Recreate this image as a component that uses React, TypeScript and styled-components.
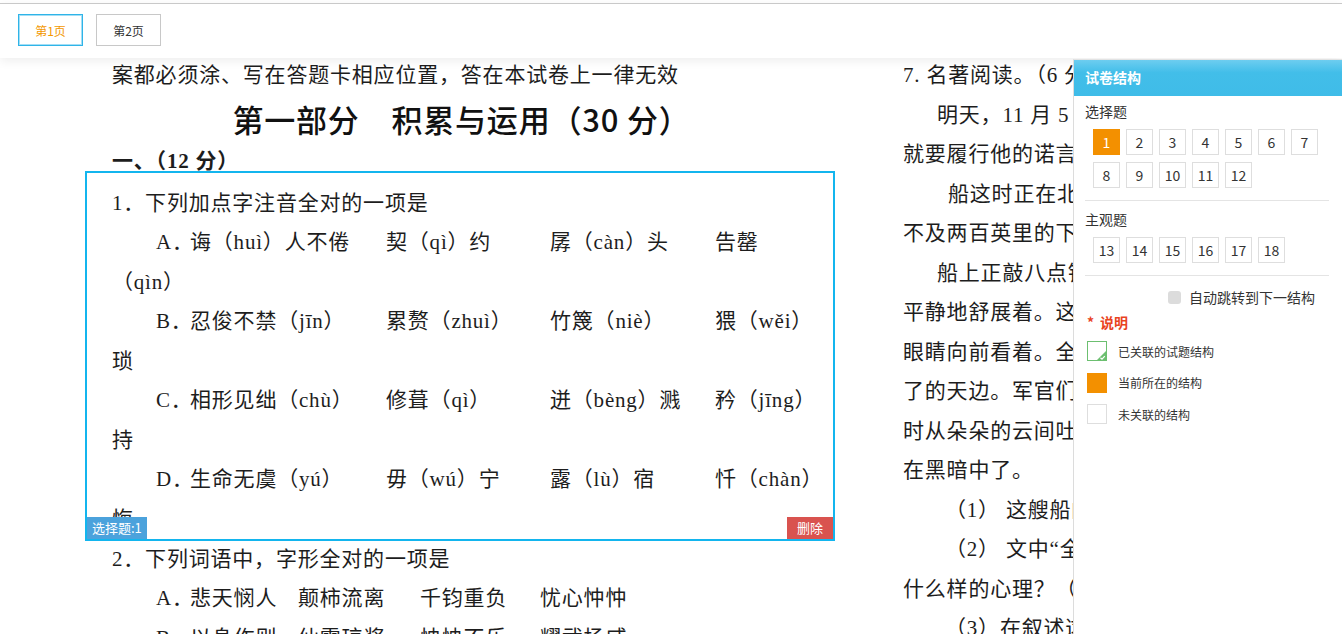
import React from "react";
import styled, { createGlobalStyle, css } from "styled-components";

const GlobalStyle = createGlobalStyle`
  html, body { margin: 0; padding: 0; background: #fff; }
  body { overflow: hidden; }
  * { box-sizing: border-box; }
`;

const Root = styled.div`
  width: 100vw;
  height: 100vh;
  display: flex;
  flex-direction: column;
  overflow: hidden;
  background: #fff;
`;

const Toolbar = styled.div`
  flex-shrink: 0;
  margin-top: 3px;
  border-top: 1px solid #c9c9c9;
  height: 55px;
  padding: 10px 18px 0;
  display: flex;
  align-items: flex-start;
  gap: 13px;
  background: #fff;
  position: relative;
  z-index: 2;
  box-shadow: 0 3px 10px rgba(0, 0, 0, 0.07);
`;

const PageTab = styled.button<{ $active?: boolean }>`
  width: 65px;
  height: 32px;
  padding: 0;
  background: #fff;
  font-family: "Noto Sans CJK SC", sans-serif;
  font-size: 12px;
  cursor: pointer;
  border: 1px solid ${(p) => (p.$active ? "#2fb4e8" : "#c8c8c8")};
  box-shadow: ${(p) => (p.$active ? "inset 0 0 0 1px #a3def5" : "none")};
  color: ${(p) => (p.$active ? "#f39800" : "#333")};
`;

const Viewport = styled.div`
  flex: 1;
  position: relative;
  overflow: hidden;
`;

const Pages = styled.div`
  display: flex;
  gap: 92px;
  padding-left: 112px;
  margin-top: -1.75px;
`;

const PageColumn = styled.div<{ $w: number }>`
  width: ${(p) => p.$w}px;
  flex-shrink: 0;
  font-family: "Liberation Serif", "Noto Sans CJK SC", serif;
  font-size: 21px;
  letter-spacing: 0.8px;
  color: #1d1d1d;
  line-height: 39.5px;
  white-space: nowrap;
`;

const Line = styled.div<{ $indent?: number }>`
  height: 39.5px;
  padding-left: ${(p) => p.$indent ?? 0}px;
`;

const Heading = styled.div`
  font-family: "Noto Sans CJK SC", sans-serif;
  font-size: 31px;
  font-weight: 500;
  letter-spacing: 0.8px;
  line-height: 46.5px;
  height: 46.5px;
  text-align: center;
  color: #111;
`;

const SectionTitle = styled.div`
  font-weight: 700;
  height: 39.5px;
`;

const Frame = styled.div`
  position: relative;
  margin: -11.25px 0 -1.5px -27px;
  width: 750px;
  border: 2px solid #13b5ee;
  padding: 11.25px 0 0 25px;
`;

const Tag = styled.span<{ $kind: "type" | "delete" }>`
  position: absolute;
  bottom: 0;
  height: 22px;
  line-height: 22px;
  font-family: "Noto Sans CJK SC", sans-serif;
  font-size: 13px;
  letter-spacing: 0;
  color: #fff;
  ${(p) =>
    p.$kind === "type"
      ? css`
          left: 0;
          padding: 0 5px;
          background: #4ba2dc;
        `
      : css`
          right: 0;
          padding: 0 10px;
          background: #d9534f;
        `}
`;

const Cell = styled.span<{ $w?: number }>`
  display: inline-block;
  ${(p) => (p.$w ? `width: ${p.$w}px;` : "")}
`;

const Panel = styled.aside`
  position: absolute;
  top: 1px;
  right: 0;
  bottom: 0;
  width: 269px;
  border-left: 1px solid #dcdcdc;
  border-top: 1px solid #e3e3e3;
  background: #fff;
  font-family: "Noto Sans CJK SC", sans-serif;
  color: #333;
  z-index: 3;
`;

const PanelHeader = styled.div`
  height: 36px;
  line-height: 35px;
  padding-left: 11px;
  color: #fff;
  font-size: 14px;
  font-weight: 700;
  background: linear-gradient(to bottom, #6dcdf0 0%, #42bee9 35%, #3fbce8 100%);
`;

const PanelBody = styled.div`
  padding: 5px 13px 0 11px;
`;

const GroupLabel = styled.div<{ $top?: number }>`
  font-size: 14px;
  line-height: 20px;
  margin-top: ${(p) => p.$top ?? 0}px;
`;

const NumGrid = styled.div`
  display: flex;
  flex-wrap: wrap;
  gap: 7px 6px;
  margin-top: 8px;
  padding-left: 8px;
`;

const NumBox = styled.span<{ $active?: boolean }>`
  width: 27px;
  height: 26px;
  display: flex;
  align-items: center;
  justify-content: center;
  font-size: 14px;
  border: 1px solid ${(p) => (p.$active ? "#f39000" : "#dedede")};
  background: ${(p) => (p.$active ? "#f39000" : "#fff")};
  color: ${(p) => (p.$active ? "#fff" : "#333")};
`;

const Divider = styled.div`
  height: 1px;
  background: #e4e4e4;
  margin-top: 12px;
`;

const AutoRow = styled.label`
  display: flex;
  justify-content: flex-end;
  align-items: center;
  gap: 8px;
  height: 20px;
  margin-top: 11px;
  padding-right: 14px;
  font-size: 14px;
`;

const CheckBox = styled.span`
  width: 13px;
  height: 13px;
  border-radius: 3px;
  background: #dcdcdc;
`;

const Note = styled.div`
  margin-top: 5px;
  padding-left: 2px;
  line-height: 20px;
  font-size: 14px;
  font-weight: 700;
  color: #e9431f;
  display: flex;
  gap: 6px;
`;

const Legend = styled.div`
  margin-top: 9px;
  padding-left: 2px;
  display: flex;
  flex-direction: column;
  gap: 11.5px;
`;

const LegendItem = styled.div`
  display: flex;
  align-items: center;
  gap: 11px;
  height: 20px;
  font-size: 12px;
  color: #333;
`;

const Swatch = styled.span<{ $kind: "linked" | "current" | "none" }>`
  position: relative;
  width: 20px;
  height: 20px;
  flex-shrink: 0;
  ${(p) =>
    p.$kind === "current"
      ? css`
          background: #f39000;
        `
      : p.$kind === "linked"
      ? css`
          border: 1px solid #6cbf70;
          background: #fff;
        `
      : css`
          border: 1px solid #dedede;
          background: #fff;
        `}
`;

const Corner = styled.svg`
  position: absolute;
  right: -1px;
  bottom: -1px;
`;

type OptRow = { cells: string[]; wrap: string };

const q1Stops = [34, 196, 164, 165];
const q1: OptRow[] = [
  { cells: ["A．", "诲（huì）人不倦", "契（qì）约", "孱（càn）头", "告罄"], wrap: "（qìn）" },
  { cells: ["B．", "忍俊不禁（jīn）", "累赘（zhuì）", "竹篾（niè）", "猥（wěi）"], wrap: "琐" },
  { cells: ["C．", "相形见绌（chù）", "修葺（qì）", "迸（bèng）溅", "矜（jīng）"], wrap: "持" },
  { cells: ["D．", "生命无虞（yú）", "毋（wú）宁", "露（lù）宿", "忏（chàn）"], wrap: "悔" },
];

const q2Stops = [34, 108, 122, 120];
const q2: string[][] = [
  ["A．", "悲天悯人", "颠柿流离", "千钧重负", "忧心忡忡"],
  ["B．", "以身作则", "仙露琼浆", "怏怏不乐", "耀武扬威"],
];

const rightLines: { t: string; i: number }[] = [
  { t: "7. 名著阅读。（6 分）", i: 0 },
  { t: "明天，11 月 5 日，就是期满的日子了。到那时，法拉古舰长", i: 34 },
  { t: "就要履行他的诺言，转舵向东南行驶，彻底离开北太平洋海面了。", i: 0 },
  { t: "船这时正在北纬 31°15′，东经 136°42′，日本陆地在我们", i: 45 },
  { t: "不及两百英里的下风。夜幕降临了，", i: 0 },
  { t: "船上正敲八点钟。大块的乌云遮住了上弦月，海水在船下", i: 34 },
  { t: "平静地舒展着。这时我正靠在右舷的舷墙上，", i: 0 },
  { t: "眼睛向前看着。全体船员都在桅杆上，注视着那渐渐缩小和渐渐黑暗", i: 0 },
  { t: "了的天边。军官们拿着望远镜，在越来越浓的黑暗中搜索。有", i: 0 },
  { t: "时从朵朵的云间吐出的月光照亮了海面，但不久一切又重新消失", i: 0 },
  { t: "在黑暗中了。", i: 0 },
  { t: "（1） 这艘船的名字叫什么？（2 分）", i: 42 },
  { t: "（2） 文中“全体船员都在桅杆上”表现了船员们", i: 42 },
  { t: "什么样的心理？（2 分）", i: 0 },
  { t: "（3）在叙述这段文字时作者用了什么方法？", i: 42 },
];

const OptionLine: React.FC<{ cells: string[]; stops: number[] }> = ({ cells, stops }) => (
  <Line $indent={44}>
    {cells.map((c, i) => (
      <Cell key={i} $w={stops[i]}>
        {c}
      </Cell>
    ))}
  </Line>
);

const choice = [1, 2, 3, 4, 5, 6, 7, 8, 9, 10, 11, 12];
const subjective = [13, 14, 15, 16, 17, 18];

export default function App() {
  return (
    <Root>
      <GlobalStyle />
      <Toolbar>
        <PageTab $active>第1页</PageTab>
        <PageTab>第2页</PageTab>
      </Toolbar>
      <Viewport>
        <Pages>
          <PageColumn $w={699}>
            <Line>案都必须涂、写在答题卡相应位置，答在本试卷上一律无效</Line>
            <Heading>第一部分　积累与运用（30 分）</Heading>
            <SectionTitle>一、（12 分）</SectionTitle>
            <Frame>
              <Line>1．下列加点字注音全对的一项是</Line>
              {q1.map((r, i) => (
                <React.Fragment key={i}>
                  <OptionLine cells={r.cells} stops={q1Stops} />
                  <Line>{r.wrap}</Line>
                </React.Fragment>
              ))}
              <Tag $kind="type">选择题:1</Tag>
              <Tag $kind="delete">删除</Tag>
            </Frame>
            <Line>2．下列词语中，字形全对的一项是</Line>
            {q2.map((r, i) => (
              <OptionLine key={i} cells={r} stops={q2Stops} />
            ))}
          </PageColumn>
          <PageColumn $w={720}>
            {rightLines.map((l, i) => (
              <Line key={i} $indent={l.i}>
                {l.t}
              </Line>
            ))}
          </PageColumn>
        </Pages>

        <Panel>
          <PanelHeader>试卷结构</PanelHeader>
          <PanelBody>
            <GroupLabel>选择题</GroupLabel>
            <NumGrid>
              {choice.map((n) => (
                <NumBox key={n} $active={n === 1}>
                  {n}
                </NumBox>
              ))}
            </NumGrid>
            <Divider />
            <GroupLabel $top={8}>主观题</GroupLabel>
            <NumGrid>
              {subjective.map((n) => (
                <NumBox key={n}>{n}</NumBox>
              ))}
            </NumGrid>
            <Divider />
            <AutoRow>
              <CheckBox />
              自动跳转到下一结构
            </AutoRow>
            <Note>
              <span>*</span>
              <span>说明</span>
            </Note>
            <Legend>
              <LegendItem>
                <Swatch $kind="linked">
                  <Corner width="11" height="11" viewBox="0 0 11 11">
                    <polygon points="11,0 11,11 0,11" fill="#6cbf70" />
                    <polyline points="4.5,7.8 6,9.2 8.8,6.2" fill="none" stroke="#fff" strokeWidth="1.2" />
                  </Corner>
                </Swatch>
                已关联的试题结构
              </LegendItem>
              <LegendItem>
                <Swatch $kind="current" />
                当前所在的结构
              </LegendItem>
              <LegendItem>
                <Swatch $kind="none" />
                未关联的结构
              </LegendItem>
            </Legend>
          </PanelBody>
        </Panel>
      </Viewport>
    </Root>
  );
}
